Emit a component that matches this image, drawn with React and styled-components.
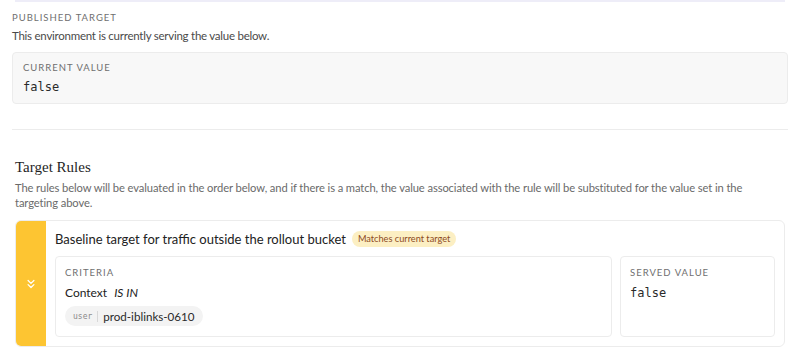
import styled, { createGlobalStyle } from 'styled-components';
import { ChevronsDown } from 'lucide-react';

const GlobalStyle = createGlobalStyle`
    html, body {
        margin: 0;
        padding: 0;
        background: #fff;
    }
    body {
        font-family: Lato, 'Noto Sans', sans-serif;
        color: #2b2b2b;
    }
`;

const Page = styled.div`
    width: 800px;
    padding: 0 12px;
    box-sizing: border-box;
`;

const TopEdge = styled.div`
    height: 2px;
    margin: 0 3px;
    background: #eeedf8;
`;

const Section = styled.section`
    padding-top: 9px;
`;

const Overline = styled.div`
    font-size: 9.5px;
    letter-spacing: 1px;
    text-transform: uppercase;
    color: #6f6f6f;
    line-height: 14px;
`;

const Hint = styled.p`
    margin: 3px 0 0;
    font-size: 11.5px;
    letter-spacing: -0.25px;
    line-height: 15px;
    color: #4a4a4a;
`;

const ValueBox = styled.div`
    margin-top: 9px;
    height: 52px;
    box-sizing: border-box;
    padding: 8px 10px;
    background: #f8f8f8;
    border: 1px solid #ececec;
    border-radius: 4px;
`;

const Mono = styled.div`
    margin-top: ${(p) => p.$gap || 4}px;
    font-family: 'DejaVu Sans Mono', 'Liberation Mono', monospace;
    font-size: 12px;
    line-height: 16px;
    color: #2a2a2a;
`;

const Divider = styled.hr`
    margin: 25px 0 0;
    border: none;
    border-top: 1px solid #ececec;
`;

const Rules = styled.section`
    padding: 28px 3px 0;
`;

const Heading = styled.h3`
    margin: 0;
    font-family: 'Liberation Serif', 'DejaVu Serif', serif;
    font-weight: 400;
    font-size: 15px;
    line-height: 18px;
    color: #1f1f1f;
`;

const Lead = styled.p`
    margin: 4px 0 0;
    font-size: 11.2px;
    letter-spacing: -0.1px;
    line-height: 15px;
    color: #6a6a6a;
`;

const RuleCard = styled.div`
    margin-top: 10px;
    display: flex;
    border: 1px solid #ececec;
    border-radius: 6px;
    overflow: hidden;
    height: 127px;
    box-sizing: border-box;
`;

const Stripe = styled.div`
    width: 30px;
    flex: none;
    background: #fdc532;
    color: #fff;
    display: flex;
    align-items: center;
    justify-content: center;
`;

const RuleBody = styled.div`
    flex: 1;
    padding: 8px 9px 9px;
    display: flex;
    flex-direction: column;
`;

const TitleRow = styled.div`
    display: flex;
    align-items: center;
    gap: 6px;
    height: 19px;
`;

const RuleTitle = styled.span`
    font-size: 13px;
    color: #222;
`;

const Badge = styled.span`
    font-size: 9.2px;
    line-height: 16px;
    padding: 0 6px;
    border-radius: 9px;
    background: #fcefc3;
    color: #8c4a22;
`;

const Columns = styled.div`
    margin-top: 8px;
    display: grid;
    grid-template-columns: 1fr 155px;
    gap: 8px;
    flex: 1;
`;

const Panel = styled.div`
    border: 1px solid #ececec;
    border-radius: 4px;
    padding: 9px;
`;

const Condition = styled.div`
    margin-top: 5px;
    font-size: 12px;
    line-height: 16px;
    color: #222;
    display: flex;
    gap: 7px;
    em {
        font-style: italic;
    }
`;

const Chip = styled.div`
    margin-top: 5px;
    display: inline-flex;
    align-items: center;
    gap: 5px;
    height: 20px;
    padding: 0 8px;
    background: #f3f3f3;
    border-radius: 10px;
    font-size: 11.6px;
    color: #2a2a2a;
`;

const ChipKey = styled.span`
    font-family: 'DejaVu Sans Mono', monospace;
    font-size: 8px;
    color: #8a8a8a;
    padding-right: 5px;
    border-right: 1px solid #d8d8d8;
    line-height: 11px;
`;

export default function App() {
    return (
        <>
            <GlobalStyle />
            <Page>
                <TopEdge />
                <Section>
                    <Overline>Published target</Overline>
                    <Hint>This environment is currently serving the value below.</Hint>
                    <ValueBox>
                        <Overline>Current value</Overline>
                        <Mono>false</Mono>
                    </ValueBox>
                </Section>
                <Divider />
                <Rules>
                    <Heading>Target Rules</Heading>
                    <Lead>
                        The rules below will be evaluated in the order below, and if there is a match, the value
                        associated with the rule will be substituted for the value set in the targeting above.
                    </Lead>
                    <RuleCard>
                        <Stripe>
                            <ChevronsDown size={14} strokeWidth={2.2} />
                        </Stripe>
                        <RuleBody>
                            <TitleRow>
                                <RuleTitle>Baseline target for traffic outside the rollout bucket</RuleTitle>
                                <Badge>Matches current target</Badge>
                            </TitleRow>
                            <Columns>
                                <Panel>
                                    <Overline>Criteria</Overline>
                                    <Condition>
                                        <span>Context</span>
                                        <em>IS IN</em>
                                    </Condition>
                                    <Chip>
                                        <ChipKey>user</ChipKey>
                                        prod-iblinks-0610
                                    </Chip>
                                </Panel>
                                <Panel>
                                    <Overline>Served value</Overline>
                                    <Mono $gap={5}>false</Mono>
                                </Panel>
                            </Columns>
                        </RuleBody>
                    </RuleCard>
                </Rules>
            </Page>
        </>
    );
}
